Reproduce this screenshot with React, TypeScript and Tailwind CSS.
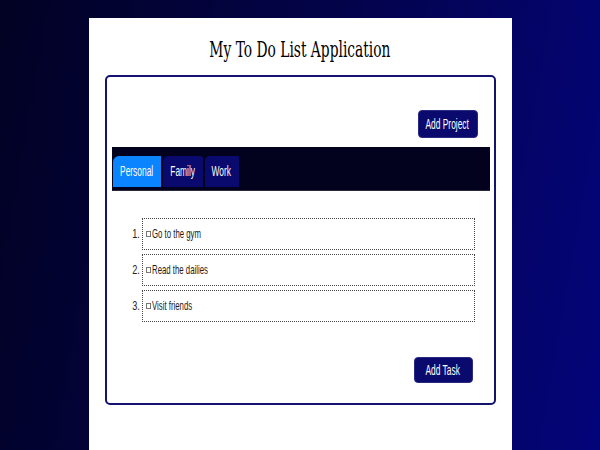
import React from "react";

const N = ({ children, className = "" }: { children: React.ReactNode; className?: string }) => (
  <span className={"inline-block scale-x-[0.6] whitespace-nowrap " + className}>{children}</span>
);

const tasks = ["Go to the gym", "Read the dailies", "Visit friends"];

export default function App() {
  return (
    <div className="w-[600px] h-[450px] overflow-hidden flex justify-center bg-[linear-gradient(100deg,#020224_0%,#03034a_50%,#04047a_100%)] font-['Liberation_Sans',Arial,sans-serif]">
      <div className="mt-[18px] w-[423px] h-[432px] bg-white flex flex-col">
        <div className="h-[57px] flex items-center justify-center pt-[5px]">
          <span className="inline-block scale-x-[0.6] whitespace-nowrap text-[23px] text-black font-['DejaVu_Serif',serif]">
            My To Do List Application
          </span>
        </div>
        <div className="mx-[16px] h-[330px] border-2 border-[#14146e] rounded-[5px] flex flex-col">
          <div className="flex justify-end mt-[33px] mr-[16px]">
            <button className="w-[60px] h-[28px] rounded-[4px] bg-[#0a0a6e] text-white text-[14px] flex items-center justify-center border border-[#2a2a80]">
              <N>Add Project</N>
            </button>
          </div>
          <div className="mt-[9px] ml-[5px] mr-[4px] h-[44px] bg-[#02021f] border-b border-[#2a2a3a] flex items-start gap-[2px] pt-[9px] pl-[1px]">
            <div className="w-[48px] h-[31px] bg-[#0a84ff] rounded-tl-[6px] text-white text-[14px] flex items-center justify-center">
              <N>Personal</N>
            </div>
            <div className="w-[40px] h-[31px] bg-[#0a0a6e] rounded-tl-[5px] rounded-tr-[3px] text-white text-[14px] flex items-center justify-center">
              <N>Family</N>
            </div>
            <div className="w-[34px] h-[31px] bg-[#0a0a6e] rounded-tl-[5px] text-white text-[14px] flex items-center justify-center">
              <N>Work</N>
            </div>
          </div>
          <div className="mt-[27px] flex flex-col gap-[4px] mr-[19px]">
            {tasks.map((t, i) => (
              <div key={t} className="flex items-center h-[32px]">
                <div className="w-[35px] pr-[2px] text-right text-[13px] text-[#222] flex justify-end">
                  <span className="inline-block scale-x-[0.7] origin-right">{i + 1}.</span>
                </div>
                <div className="flex-1 h-[32px] border border-dotted border-[#444] flex items-center pl-[3px]">
                  <span className="w-[5px] h-[6px] border border-[#777] mr-[1px] shrink-0" />
                  <span className="inline-block scale-x-[0.6] origin-left whitespace-nowrap text-[13px] text-[#1a1a1a]">{t}</span>
                </div>
              </div>
            ))}
          </div>
          <div className="flex justify-end mt-[35px] mr-[21px]">
            <button className="w-[59px] h-[26px] rounded-[4px] bg-[#0a0a6e] text-white text-[14px] flex items-center justify-center border border-[#2a2a80]">
              <N>Add Task</N>
            </button>
          </div>
        </div>
      </div>
    </div>
  );
}
